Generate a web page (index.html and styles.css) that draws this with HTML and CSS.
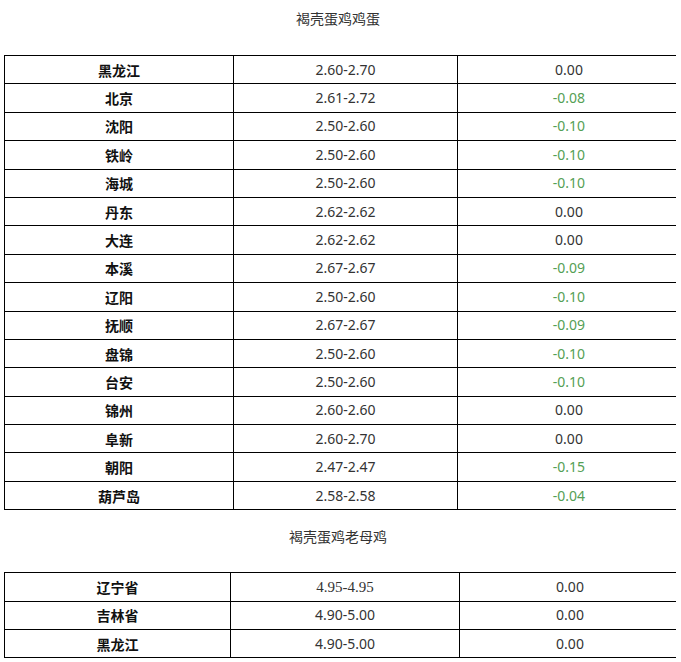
FILE: index.html
```html
<!DOCTYPE html>
<html lang="zh-CN">
<head>
<meta charset="utf-8">
<title>褐壳蛋鸡</title>
<link rel="stylesheet" href="styles.css">
</head>
<body>
<div class="wrap">
  <div class="title">褐壳蛋鸡鸡蛋</div>
  <table class="grid grid-a">
    <colgroup><col class="c1"><col class="c2"><col class="c3"></colgroup>
    <tbody>
      <tr><td class="name">黑龙江</td><td>2.60-2.70</td><td>0.00</td></tr>
      <tr><td class="name">北京</td><td>2.61-2.72</td><td class="down">-0.08</td></tr>
      <tr><td class="name">沈阳</td><td>2.50-2.60</td><td class="down">-0.10</td></tr>
      <tr><td class="name">铁岭</td><td>2.50-2.60</td><td class="down">-0.10</td></tr>
      <tr><td class="name">海城</td><td>2.50-2.60</td><td class="down">-0.10</td></tr>
      <tr><td class="name">丹东</td><td>2.62-2.62</td><td>0.00</td></tr>
      <tr><td class="name">大连</td><td>2.62-2.62</td><td>0.00</td></tr>
      <tr><td class="name">本溪</td><td>2.67-2.67</td><td class="down">-0.09</td></tr>
      <tr><td class="name">辽阳</td><td>2.50-2.60</td><td class="down">-0.10</td></tr>
      <tr><td class="name">抚顺</td><td>2.67-2.67</td><td class="down">-0.09</td></tr>
      <tr><td class="name">盘锦</td><td>2.50-2.60</td><td class="down">-0.10</td></tr>
      <tr><td class="name">台安</td><td>2.50-2.60</td><td class="down">-0.10</td></tr>
      <tr><td class="name">锦州</td><td>2.60-2.60</td><td>0.00</td></tr>
      <tr><td class="name">阜新</td><td>2.60-2.70</td><td>0.00</td></tr>
      <tr><td class="name">朝阳</td><td>2.47-2.47</td><td class="down">-0.15</td></tr>
      <tr><td class="name">葫芦岛</td><td>2.58-2.58</td><td class="down">-0.04</td></tr>
    </tbody>
  </table>
  <div class="title title-second">褐壳蛋鸡老母鸡</div>
  <table class="grid grid-b">
    <colgroup><col class="d1"><col class="d2"><col class="d3"></colgroup>
    <tbody>
      <tr><td class="name">辽宁省</td><td class="serif">4.95-4.95</td><td>0.00</td></tr>
      <tr><td class="name">吉林省</td><td>4.90-5.00</td><td>0.00</td></tr>
      <tr><td class="name">黑龙江</td><td>4.90-5.00</td><td>0.00</td></tr>
    </tbody>
  </table>
</div>
</body>
</html>
```

FILE: styles.css
```css
html, body {
  margin: 0;
  padding: 0;
  background: #fff;
}
body {
  font-family: "Noto Sans", "Noto Sans CJK SC", sans-serif;
  color: #333;
  font-size: 14px;
}
.wrap {
  width: 676px;
  overflow: hidden;
}
.title {
  height: 36px;
  line-height: 36px;
  text-align: center;
  font-family: "Noto Sans CJK SC", sans-serif;
  font-size: 14px;
  color: #333;
  margin-bottom: 19px;
}
.title-second {
  margin-top: 8px;
  margin-bottom: 18px;
}
.grid {
  border-collapse: collapse;
  table-layout: fixed;
  width: 676px;
  margin-left: 4px;
}
.grid td {
  border: 1px solid #000;
  height: 27.4px;
  padding: 0;
  text-align: center;
  vertical-align: middle;
  font-size: 14px;
  line-height: 18px;
  color: #333;
}
.grid td.name {
  font-family: "Noto Sans CJK SC", sans-serif;
  font-weight: bold;
  color: #111;
}
.grid td.down {
  color: #55a055;
}
.grid td.serif {
  font-family: "Liberation Serif", serif;
  font-size: 15px;
}
.c1 { width: 229px; }
.c2 { width: 224px; }
.c3 { width: 223px; }
.d1 { width: 226px; }
.d2 { width: 229px; }
.d3 { width: 221px; }
```
